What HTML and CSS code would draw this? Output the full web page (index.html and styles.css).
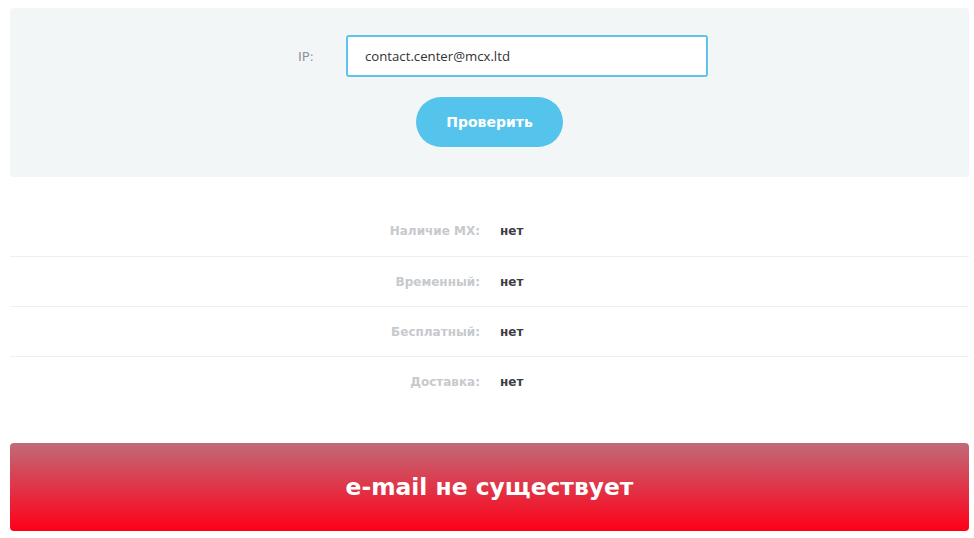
FILE: index.html
```html
<!DOCTYPE html>
<html lang="ru">
<head>
    <meta charset="UTF-8">
    <meta name="viewport" content="width=device-width, initial-scale=1.0">
    <title>Проверка e-mail</title>

    <link rel="stylesheet" href="styles.css">
</head>
<body>
    <div class="check-box">
        <div class="form-row">
            <label class="form-label" for="inp-ip">IP:</label>
            <input type="text" id="inp-ip" class="form-control" value="contact.center@mcx.ltd">
        </div>
        <div class="form-actions">
            <button class="btn-check">Проверить</button>
        </div>
    </div>

    <div class="result-list">
        <div class="result-row">
            <span class="result-label">Наличие MX:</span>
            <span class="result-value">нет</span>
        </div>
        <div class="result-row">
            <span class="result-label">Временный:</span>
            <span class="result-value">нет</span>
        </div>
        <div class="result-row">
            <span class="result-label">Бесплатный:</span>
            <span class="result-value">нет</span>
        </div>
        <div class="result-row">
            <span class="result-label">Доставка:</span>
            <span class="result-value">нет</span>
        </div>
    </div>

    <div class="status status-bad">e-mail не существует</div>
</body>
</html>
```

FILE: styles.css
```css
* {
    margin: 0;
    padding: 0;
    box-sizing: border-box;
}

body {
    font-family: "DejaVu Sans", "Noto Sans", sans-serif;
    background: #fff;
    margin: 8px 5px 0 10px;
}

.check-box {
    background: #f3f6f7;
    border-radius: 4px;
    padding: 27px 0 30px;
}

.form-row {
    display: grid;
    grid-template-columns: 304px 362px;
    column-gap: 32px;
    align-items: center;
}

.form-label {
    text-align: right;
    font-size: 13px;
    color: #8f9397;
}

.form-control {
    display: block;
    width: 100%;
    height: 42px;
    padding: 0 17px;
    font-family: "Open Sans", sans-serif;
    font-size: 13.2px;
    color: #333;
    background: #fff;
    border: 2px solid #5ec4ec;
    border-radius: 3px;
    outline: 0;
}

.form-actions {
    display: flex;
    justify-content: center;
    margin-top: 20px;
}

.btn-check {
    width: 147px;
    height: 50px;
    border: 0;
    border-radius: 25px;
    background: #55c4ed;
    color: #fff;
    font-family: inherit;
    font-size: 14px;
    font-weight: 700;
    cursor: pointer;
}

.result-list {
    margin-top: 29px;
}

.result-row {
    display: grid;
    grid-template-columns: 470px 1fr;
    column-gap: 20px;
    align-items: center;
    height: 50px;
    font-size: 12px;
    font-weight: 700;
}

.result-row + .result-row {
    border-top: 1px solid #eeeff0;
}

.result-label {
    text-align: right;
    color: #c6c9cd;
}

.result-value {
    color: #3c3e44;
}

.status {
    margin-top: 37px;
    height: 88px;
    border-radius: 4px;
    display: flex;
    align-items: center;
    justify-content: center;
    color: #fff;
    font-size: 23.4px;
    font-weight: 700;
}

.status-bad {
    background: linear-gradient(to bottom, #c06a78, #ff0018);
}
```
